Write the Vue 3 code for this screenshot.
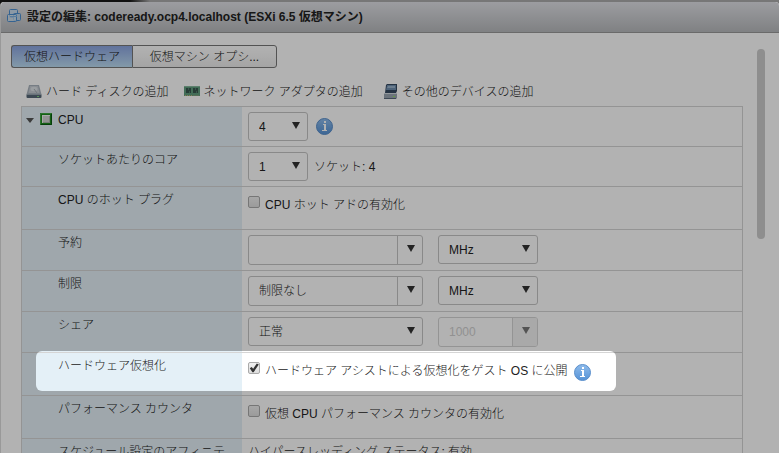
<template>
  <div class="page">
    <section class="dialog" aria-labelledby="dialog-title">
      <header class="dialog-header">
        <svg class="vm-icon" viewBox="0 0 16 16" width="16" height="16">
          <rect x="2.5" y="0.5" width="8" height="8" rx="1" fill="#c9dcec" stroke="#4d8ed0" />
          <rect x="6.5" y="4.5" width="7" height="7" rx="1" fill="#bdd3e6" stroke="#4d8ed0" />
          <rect x="0.5" y="5.5" width="9" height="7" rx="1" fill="#d3e2ee" fill-opacity="0.7" stroke="#4d8ed0" />
          <path d="M3 7.5h7" fill="none" stroke="#7fb0e0" />
        </svg>
        <h1 id="dialog-title">設定の編集: codeready.ocp4.localhost (ESXi 6.5 仮想マシン)</h1>
      </header>

      <div class="dialog-body">
        <div class="content">
          <div class="tabs">
            <button
              v-for="tab in tabs"
              :key="tab.key"
              type="button"
              class="tab"
              :class="[tab.key, { active: activeTab === tab.key }]"
              @click="activeTab = tab.key"
            >
              {{ tab.label }}
            </button>
          </div>

          <div class="toolbar">
            <button type="button" class="tool">
              <svg viewBox="0 0 16 16" width="16" height="16">
                <path d="M3 1h10l2.5 9.500h-15z" fill="#aab3bd" />
                <path d="M4 2h8l1.500 7h-11z" fill="#c6ccd3" />
                <ellipse cx="8" cy="5" rx="3.500" ry="2.200" fill="#dde2e7" />
                <path d="M8 5l3 4" stroke="#a2aab2" />
                <rect x="0.500" y="10" width="15" height="4" rx="1" fill="#566878" />
                <rect x="1" y="10" width="14" height="1" fill="#97a4af" />
                <rect x="11" y="12" width="2" height="1" fill="#7ed07e" />
              </svg>
              <span>ハード ディスクの追加</span>
            </button>
            <button type="button" class="tool">
              <svg viewBox="0 0 16 16" width="16" height="16">
                <rect x="0" y="2" width="16" height="10" fill="#5f9c7d" />
                <rect x="0" y="2" width="16" height="1" fill="#86b79c" />
                <rect x="2" y="4" width="5" height="5" fill="#37574e" />
                <rect x="9" y="4" width="5" height="5" fill="#37574e" />
                <path d="M4.500 4v2M5.500 7v2M11.500 4v2M12.500 7v2" stroke="#527d6c" />
                <path d="M1 11.500h7" stroke="#c2b275" stroke-dasharray="1 1" />
                <path d="M9 11.500h6" stroke="#7c9c7c" />
              </svg>
              <span>ネットワーク アダプタの追加</span>
            </button>
            <button type="button" class="tool">
              <svg viewBox="0 0 20 16" width="20" height="16">
                <path d="M8 1l1-1h10v7l-1 2H7z" fill="#34485f" />
                <path d="M9 1h9v5H8z" fill="#6e8dae" />
                <path d="M10 2h7v2H9z" fill="#9ab4cc" />
                <path d="M7 9h12v5l-1 1H6V10z" fill="#9ba7b2" />
                <rect x="6" y="9" width="13" height="1" fill="#d4dbe1" />
                <path d="M6 14.500h12" stroke="#59697a" />
                <rect x="15" y="12" width="2" height="1" fill="#8ee060" />
              </svg>
              <span>その他のデバイスの追加</span>
            </button>
          </div>

          <div class="settings">
            <div class="row">
              <div class="name group">
                <button type="button" class="expander" aria-label="CPU" aria-expanded="true"></button>
                <svg viewBox="0 0 12 12" width="12" height="12">
                  <rect width="12" height="12" fill="#1f8a1f" />
                  <path d="M0.500 11.500v-11h11" fill="none" stroke="#3fa53f" />
                  <path d="M1 11.500h10.500V1" fill="none" stroke="#0a5a10" />
                  <rect x="2" y="2" width="8" height="8" fill="#f0f5f0" />
                  <rect x="3" y="3" width="7" height="7" fill="#a9b5a9" />
                  <rect x="3" y="3" width="6" height="6" fill="#d2d2d2" />
                </svg>
                <label for="cpu-count">CPU</label>
              </div>
              <div class="value">
                <span class="select small">
                  <select id="cpu-count" v-model="cpu">
                    <option v-for="n in counts" :key="n">{{ n }}</option>
                  </select>
                </span>
                <button type="button" class="info" aria-label="CPU">
                  <svg viewBox="0 0 17 17" width="17" height="17">
                    <circle cx="8.500" cy="8.500" r="8" fill="url(#info-fill)" stroke="#5b8fcb" />
                    <path d="M7 6h3v6h1v1H6v-1h2V7H7z" fill="#fff" />
                    <rect x="8" y="3" width="2" height="2" fill="#fff" />
                  </svg>
                </button>
              </div>
            </div>

            <div class="row">
              <div class="name"><label for="cores">ソケットあたりのコア</label></div>
              <div class="value">
                <span class="select small">
                  <select id="cores" v-model="cores">
                    <option v-for="n in counts" :key="n">{{ n }}</option>
                  </select>
                </span>
                <span>ソケット: {{ cpu / cores }}</span>
              </div>
            </div>

            <div class="row check-row">
              <div class="name">CPU のホット プラグ</div>
              <div class="value">
                <label class="check">
                  <input v-model="hotAdd" type="checkbox" />
                  <span>CPU ホット アドの有効化</span>
                </label>
              </div>
            </div>

            <div v-for="item in limits" :key="item.id" class="row">
              <div class="name"><label :for="item.id">{{ item.label }}</label></div>
              <div class="value wide">
                <span class="combo">
                  <input :id="item.id" v-model="item.value" type="text" />
                  <button type="button" :aria-label="item.label"></button>
                </span>
                <span class="select unit">
                  <select v-model="item.unit" :aria-label="item.label">
                    <option>MHz</option>
                    <option>GHz</option>
                  </select>
                </span>
              </div>
            </div>

            <div class="row">
              <div class="name"><label for="shares">シェア</label></div>
              <div class="value wide">
                <span class="select">
                  <select id="shares" v-model="shares">
                    <option>低</option>
                    <option>正常</option>
                    <option>高</option>
                  </select>
                </span>
                <span class="combo unit disabled">
                  <input type="text" value="1000" aria-label="シェア" disabled />
                  <button type="button" aria-label="シェア" disabled></button>
                </span>
              </div>
            </div>

            <div class="row check-row">
              <div class="name">ハードウェア仮想化</div>
              <div class="value">
                <label class="check">
                  <input v-model="hardwareAssist" type="checkbox" />
                  <span>ハードウェア アシストによる仮想化をゲスト OS に公開</span>
                </label>
                <button type="button" class="info" aria-label="ハードウェア仮想化">
                  <svg viewBox="0 0 17 17" width="17" height="17">
                    <defs>
                      <linearGradient id="info-fill" x1="0" y1="0" x2="0" y2="1">
                        <stop offset="0" stop-color="#8fbcec" />
                        <stop offset="1" stop-color="#5592d6" />
                      </linearGradient>
                    </defs>
                    <circle cx="8.500" cy="8.500" r="8" fill="url(#info-fill)" stroke="#5b8fcb" />
                    <path d="M7 6h3v6h1v1H6v-1h2V7H7z" fill="#fff" />
                    <rect x="8" y="3" width="2" height="2" fill="#fff" />
                  </svg>
                </button>
              </div>
              <div class="spotlight"></div>
            </div>

            <div class="row check-row">
              <div class="name">パフォーマンス カウンタ</div>
              <div class="value">
                <label class="check">
                  <input v-model="counters" type="checkbox" />
                  <span>仮想 CPU パフォーマンス カウンタの有効化</span>
                </label>
              </div>
            </div>

            <div class="row text-row">
              <div class="name">スケジュール設定のアフィニテ</div>
              <div class="value">ハイパースレッディング ステータス: 有効</div>
            </div>
          </div>
        </div>

        <div class="scrollbar">
          <div class="thumb"></div>
        </div>
      </div>
    </section>
  </div>
</template>

<script setup>
import { ref } from "vue";

const tabs = [
  { key: "hardware", label: "仮想ハードウェア" },
  { key: "options", label: "仮想マシン オプシ..." }
];
const activeTab = ref("hardware");

const counts = [1, 2, 4, 8];
const cpu = ref(4);
const cores = ref(1);

const limits = ref([
  { id: "reservation", label: "予約", value: "", unit: "MHz" },
  { id: "limit", label: "制限", value: "制限なし", unit: "MHz" }
]);

const shares = ref("正常");
const hotAdd = ref(false);
const hardwareAssist = ref(true);
const counters = ref(false);
</script>

<style>
body {
  margin: 0;
}
</style>

<style scoped>
.page {
  box-sizing: border-box;
  height: 100vh;
  padding-top: 2px;
  overflow: hidden;
  font-family: "Liberation Sans", "Noto Sans CJK JP", sans-serif;
  font-size: 12px;
  font-weight: 300;
  line-height: 16px;
  color: #222;
  background: linear-gradient(to right, #111 130px, #777 150px);
}

.page * {
  box-sizing: border-box;
}

button,
input,
select {
  padding: 0;
  margin: 0;
  font: inherit;
  color: inherit;
  appearance: none;
  background: none;
  border: none;
  outline: none;
}

.dialog {
  display: flex;
  flex-direction: column;
  height: 100%;
  overflow: hidden;
  background: #fff;
  border-left: 1px solid #999;
  border-radius: 4px 4px 0 0;
}

.dialog-header {
  display: flex;
  flex: none;
  gap: 4px;
  align-items: center;
  height: 31px;
  padding: 0 6px;
  background: linear-gradient(#e0e1e6, #b7b9bc);
  border-bottom: 1px solid #999;
}

h1 {
  margin: 0;
  font-size: 12px;
  font-weight: 700;
  line-height: 16px;
  color: #222;
}

.dialog-body {
  display: flex;
  flex: 1;
  gap: 14px;
  min-height: 0;
  padding: 0 14px 0 10px;
}

.content {
  flex: 1;
  min-width: 0;
  padding-top: 12px;
}

.tabs {
  display: flex;
}

.tab {
  flex: none;
  width: 145px;
  height: 23px;
  background: linear-gradient(#fff, #ececec);
  border: 1px solid #777;
  border-radius: 0 3px 3px 0;
}

.tab.hardware {
  width: 121px;
  border-right-width: 0;
  border-radius: 3px 0 0 3px;
}

.tab.active {
  background: linear-gradient(#8ba4e0, #bcdcf2);
}

.toolbar {
  display: flex;
  gap: 15px;
  padding: 16px 15px 6px;
}

.tool {
  display: flex;
  gap: 4px;
  align-items: center;
  white-space: nowrap;
}

svg {
  display: block;
  flex: none;
}

.settings {
  margin-left: 10px;
  border: 1px solid #d5d5d5;
}

.row {
  position: relative;
  display: flex;
  border-bottom: 1px solid #d5d5d5;
}

.name {
  flex: none;
  width: 220px;
  padding: 5px 0 0 36px;
  background: #e4f0f7;
}

.name.group {
  display: flex;
  gap: 6px;
  align-items: flex-start;
  padding-left: 4px;
}

.name.group svg {
  margin-top: 1px;
}

.expander {
  width: 8px;
  height: 5px;
  margin-top: 6px;
  background: #555;
  clip-path: polygon(0 0, 100% 0, 50% 100%);
}

.value {
  display: flex;
  flex: 1;
  gap: 6px;
  align-items: center;
  padding: 5px 6px;
}

.value.wide {
  gap: 15px;
  align-items: flex-start;
}

.check-row {
  height: 43px;
}

.check-row .value {
  align-items: flex-start;
  padding-top: 9px;
}

.text-row .value {
  align-items: flex-start;
}

.select {
  position: relative;
  width: 175px;
}

.small {
  width: 60px;
}

.unit {
  width: 100px;
}

.select select {
  display: block;
  width: 100%;
  height: 29px;
  padding: 0 20px 0 10px;
  border: 1px solid #c4c4c4;
  border-radius: 3px;
}

.select::after,
.combo button::after {
  position: absolute;
  top: 10px;
  right: 8px;
  width: 8px;
  height: 7px;
  pointer-events: none;
  content: "";
  background: #333;
  clip-path: polygon(0 0, 100% 0, 50% 100%);
}

.combo {
  display: flex;
  width: 175px;
  height: 30px;
  overflow: hidden;
  border: 1px solid #c4c4c4;
  border-radius: 3px;
}

.combo.unit {
  width: 100px;
}

.combo input {
  flex: 1;
  min-width: 0;
  padding-left: 10px;
}

.combo button {
  position: relative;
  flex: none;
  width: 25px;
  border-left: 1px solid #c4c4c4;
}

.combo button::after {
  top: 9px;
  right: 7px;
}

.combo.disabled {
  color: #d0d0d0;
  border-color: #d5d5d5;
}

.combo.disabled button {
  background: #f2f2f2;
  border-color: #d5d5d5;
}

.combo.disabled button::after {
  background: #777;
}

.check {
  display: flex;
  gap: 5px;
  align-items: flex-start;
}

.check span {
  margin-top: 1px;
}

.check input {
  width: 12px;
  height: 12px;
  background: linear-gradient(#f0f0f0, #dedede);
  border: 1px solid #aaa;
  border-radius: 2px;
}

.check input:checked::before {
  display: block;
  width: 10px;
  height: 10px;
  content: "";
  background: #333;
  clip-path: polygon(8% 52%, 26% 40%, 42% 58%, 78% 4%, 98% 16%, 46% 92%, 34% 92%);
}

.info {
  margin-left: 2px;
}

.check-row .info {
  margin-top: 2px;
  margin-left: 0;
}

/* dims everything around the highlighted row */
.spotlight {
  position: absolute;
  top: -2px;
  left: 14px;
  z-index: 10;
  width: 580px;
  height: 40px;
  pointer-events: none;
  border-radius: 6px;
  box-shadow: 0 0 0 100vmax rgb(0 0 0 / 30%);
}

.scrollbar {
  flex: none;
  width: 8px;
  padding-top: 16px;
}

.thumb {
  height: 190px;
  background: #ccc;
  border-radius: 4px;
}
</style>
